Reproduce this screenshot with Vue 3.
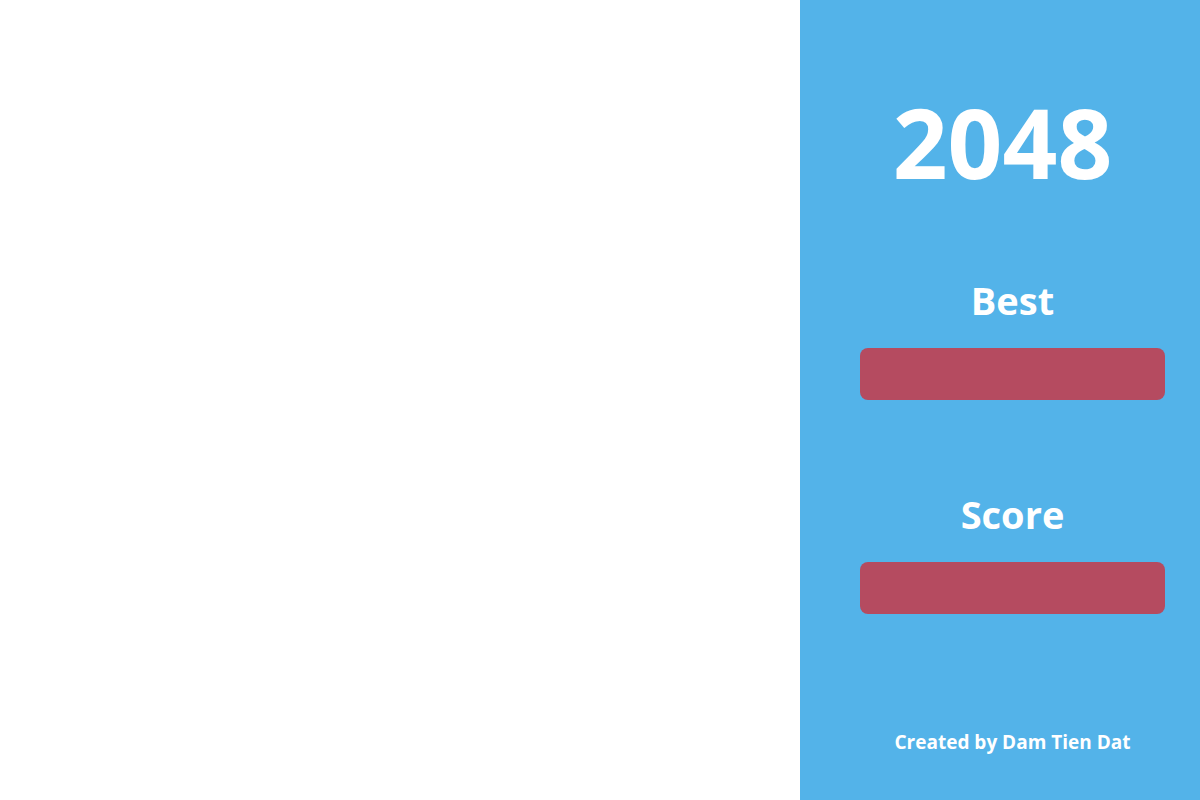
<script setup>
const scores = [
  { id: 'best', label: 'Best', value: '' },
  { id: 'score', label: 'Score', value: '' },
]
</script>

<template>
  <div class="game">
    <main class="board" aria-label="Game board"></main>
    <aside class="sidebar">
      <h1 class="title">2048</h1>
      <section v-for="item in scores" :key="item.id" class="score">
        <h2 :id="item.id" class="label">{{ item.label }}</h2>
        <output class="value" :aria-labelledby="item.id">{{ item.value }}</output>
      </section>
      <footer class="credit">Created by Dam Tien Dat</footer>
    </aside>
  </div>
</template>

<style>
body {
  margin: 0;
}
</style>

<style scoped>
.game {
  display: grid;
  grid-template-columns: 2fr 1fr;
  min-height: 100vh;
  background: #fff;
}

.sidebar {
  display: flex;
  flex-direction: column;
  box-sizing: border-box;
  padding: 86px 35px 0 60px;
  background: #53b3e9;
  color: #fff;
  font-family: "Open Sans", "Noto Sans", sans-serif;
  font-weight: 700;
  text-align: center;
}

.title {
  margin: 0 0 84px;
  padding-right: 20px;
  font-size: 96px;
  line-height: 112px;
  font-weight: 700;
}

.score {
  margin-bottom: 96px;
}

.label {
  margin: 0 0 30px;
  font-size: 38px;
  line-height: 36px;
  font-weight: 700;
}

.value {
  display: block;
  height: 52px;
  border-radius: 8px;
  background: #b54b60;
}

.credit {
  margin-top: 20px;
  font-size: 19px;
  line-height: 24px;
}
</style>
